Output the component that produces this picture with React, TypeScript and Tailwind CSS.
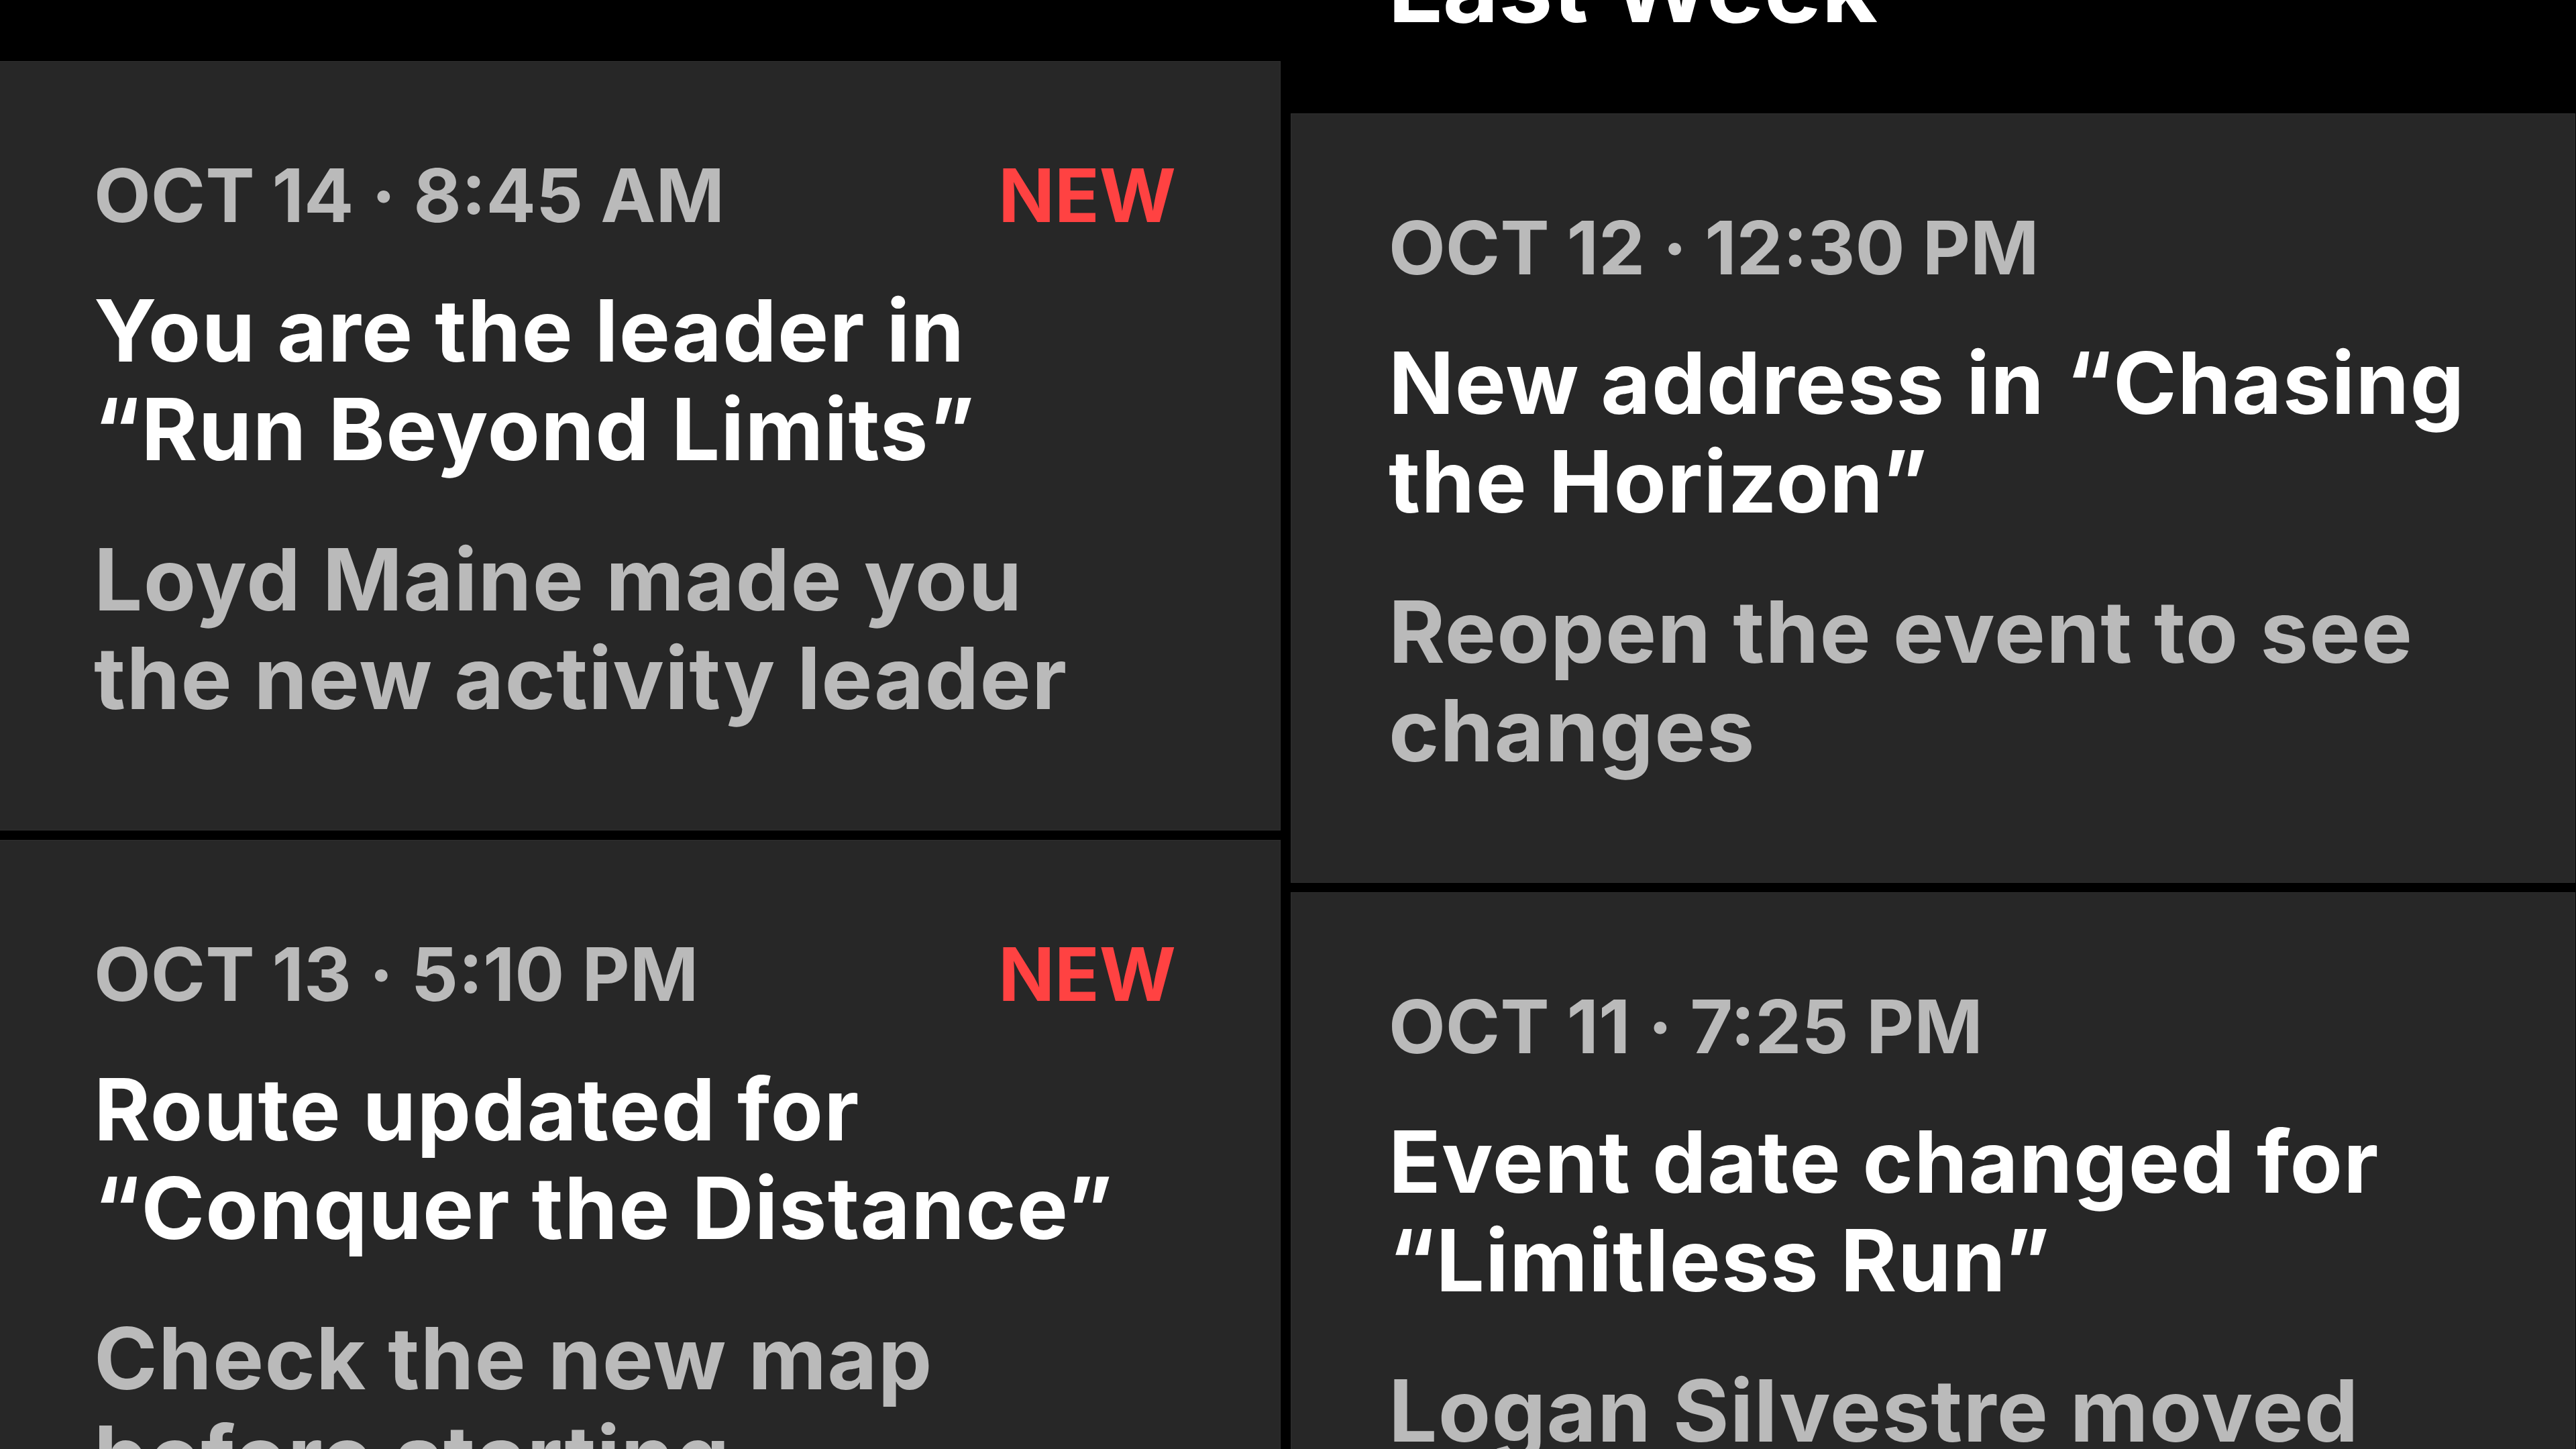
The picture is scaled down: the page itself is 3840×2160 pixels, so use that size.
import React from "react";

type Notice = {
  date: string;
  title: string;
  body: string;
  isNew?: boolean;
};

const thisWeek: Notice[] = [
  {
    date: "OCT 14 · 8:45 AM",
    title: "You are the leader in “Run Beyond Limits”",
    body: "Loyd Maine made you the new activity leader",
    isNew: true,
  },
  {
    date: "OCT 13 · 5:10 PM",
    title: "Route updated for “Conquer the Distance”",
    body: "Check the new map before starting",
    isNew: true,
  },
];

const lastWeek: Notice[] = [
  {
    date: "OCT 12 · 12:30 PM",
    title: "New address in “Chasing the Horizon”",
    body: "Reopen the event to see changes",
  },
  {
    date: "OCT 11 · 7:25 PM",
    title: "Event date changed for “Limitless Run”",
    body: "Logan Silvestre moved the start to Oct 19",
  },
];

function NoticeCard({ n }: { n: Notice }) {
  return (
    <div className="border border-[#2f2f2f] bg-[#272727] pt-[133px] pb-[153px] pl-[145px] pr-[155px]">
      <div className="flex items-center justify-between text-[110px] leading-[132px] font-bold">
        <span className="text-[#bababa]">{n.date}</span>
        {n.isNew && <span className="text-[#ff4242]">NEW</span>}
      </div>
      <h3 className="mt-[62px] max-w-[1610px] text-[128px] leading-[147px] font-bold tracking-[0.01em] text-white">
        {n.title}
      </h3>
      <p className="mt-[77px] max-w-[1610px] text-[128px] leading-[147px] font-bold tracking-[0.01em] text-[#bababa]">
        {n.body}
      </p>
    </div>
  );
}

export default function App() {
  return (
    <div className="h-[2160px] overflow-hidden bg-black font-['Inter',sans-serif]">
      <div className="ml-[-6px] grid w-[3845px] grid-cols-2 items-start gap-x-[15px]">
        {/* this week — heading scrolled out of view */}
        <section className="mt-[91px] flex flex-col gap-[14px]">
          {thisWeek.map((n) => (
            <NoticeCard key={n.date} n={n} />
          ))}
        </section>

        <section className="-mt-[106px] flex flex-col">
          <h2 className="mb-[102px] pl-[145px] text-[144px] leading-[173px] font-bold text-white">
            Last Week
          </h2>
          <div className="flex flex-col gap-[14px]">
            {lastWeek.map((n) => (
              <NoticeCard key={n.date} n={n} />
            ))}
          </div>
        </section>
      </div>
    </div>
  );
}
